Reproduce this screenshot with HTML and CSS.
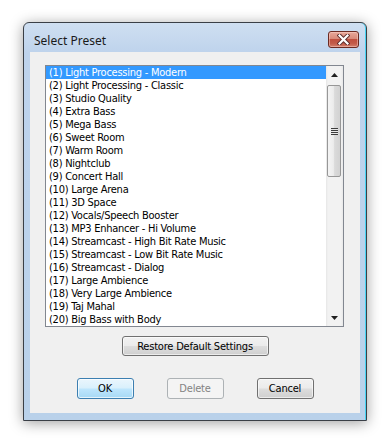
FILE: index.html
```html
<!DOCTYPE html>
<html>
<head>
<meta charset="utf-8">
<title>Select Preset</title>
<link rel="stylesheet" href="styles.css">
</head>
<body>
<div class="window">
  <div class="titlebar">
    <span class="title">Select Preset</span>
    <div class="close">
      <svg width="13" height="11" viewBox="0 0 13 11">
        <path d="M2.5 1.5 L10.5 9.5 M10.5 1.5 L2.5 9.5" stroke="#5a2a2a" stroke-width="4" stroke-linecap="square" fill="none"/>
        <path d="M2.5 1.5 L10.5 9.5 M10.5 1.5 L2.5 9.5" stroke="#ffffff" stroke-width="2.2" stroke-linecap="square" fill="none"/>
      </svg>
    </div>
  </div>
  <div class="client">
    <div class="listbox">
      <ul class="items">
        <li class="sel">(1) Light Processing - Modern</li>
        <li>(2) Light Processing - Classic</li>
        <li>(3) Studio Quality</li>
        <li>(4) Extra Bass</li>
        <li>(5) Mega Bass</li>
        <li>(6) Sweet Room</li>
        <li>(7) Warm Room</li>
        <li>(8) Nightclub</li>
        <li>(9) Concert Hall</li>
        <li>(10) Large Arena</li>
        <li>(11) 3D Space</li>
        <li>(12) Vocals/Speech Booster</li>
        <li>(13) MP3 Enhancer - Hi Volume</li>
        <li>(14) Streamcast - High Bit Rate Music</li>
        <li>(15) Streamcast - Low Bit Rate Music</li>
        <li>(16) Streamcast - Dialog</li>
        <li>(17) Large Ambience</li>
        <li>(18) Very Large Ambience</li>
        <li>(19) Taj Mahal</li>
        <li>(20) Big Bass with Body</li>
      </ul>
      <div class="scrollbar">
        <div class="sb-btn">
          <svg width="7" height="4" viewBox="0 0 7 4"><path d="M0 4 L3.5 0 L7 4 Z" fill="#202020"/></svg>
        </div>
        <div class="sb-track">
          <div class="thumb">
            <span class="grip"></span>
          </div>
        </div>
        <div class="sb-btn">
          <svg width="7" height="4" viewBox="0 0 7 4"><path d="M0 0 L7 0 L3.5 4 Z" fill="#202020"/></svg>
        </div>
      </div>
    </div>
    <div class="row-restore">
      <button class="btn restore">Restore Default Settings</button>
    </div>
    <div class="row-actions">
      <button class="btn default">OK</button>
      <button class="btn" disabled>Delete</button>
      <button class="btn">Cancel</button>
    </div>
  </div>
</div>
</body>
</html>
```

FILE: styles.css
```css
html, body {
  margin: 0;
  padding: 0;
  background: #ffffff;
}
body {
  width: 390px;
  height: 444px;
  overflow: hidden;
  padding-top: 22px;
  padding-left: 23px;
  box-sizing: border-box;
}
.window {
  width: 344px;
  height: 399px;
  box-sizing: border-box;
  border: 1px solid #3a3f46;
  border-radius: 6px 6px 0 0;
  background: linear-gradient(180deg, #cfdff1 0px, #bed3ec 30px, #b9d1ea 100%);
  box-shadow: 0 2px 14px rgba(0, 0, 0, 0.38), inset -1px 0 0 #46d4f4;
  display: flex;
  flex-direction: column;
  padding: 0 6px 7px 6px;
}
.titlebar {
  height: 29px;
  display: flex;
  align-items: flex-start;
  justify-content: space-between;
  flex: none;
}
.title {
  font-family: "Noto Sans", "Open Sans", sans-serif;
  font-size: 12px;
  color: #1a1a1a;
  margin-left: 4px;
  margin-top: 10px;
  line-height: 16px;
}
.close {
  width: 29px;
  height: 15px;
  margin-top: 8px;
  margin-right: 1px;
  border: 1px solid #6b2a22;
  border-radius: 3px;
  background: linear-gradient(180deg, #e8a89a 0%, #d98a7a 45%, #c0503f 50%, #c25a48 75%, #d37e6c 100%);
  display: flex;
  align-items: center;
  justify-content: center;
  box-shadow: inset 0 0 0 1px rgba(255, 220, 210, 0.45);
}
.client {
  flex: 1;
  background: #f0f0f0;
  display: flex;
  flex-direction: column;
  align-items: center;
  padding-top: 13px;
  font-family: "DejaVu Sans Condensed", "DejaVu Sans", sans-serif;
  font-stretch: condensed;
  font-size: 11px;
}
.listbox {
  width: 299px;
  height: 262px;
  box-sizing: border-box;
  border: 1px solid #828790;
  background: #ffffff;
  display: flex;
  margin-left: -1px;
}
.items {
  list-style: none;
  margin: 0;
  padding: 0;
  flex: 1;
}
.items li {
  height: 13px;
  line-height: 13px;
  padding-left: 3px;
  color: #000000;
  white-space: nowrap;
  letter-spacing: -0.25px;
}
.items li.sel {
  background: #3399ff;
  color: #ffffff;
}
.scrollbar {
  width: 17px;
  display: flex;
  flex-direction: column;
  background: linear-gradient(90deg, #e6e6e6 0, #f2f2f2 2px, #f2f2f2 15px, #e8e8e8 17px);
}
.sb-btn {
  height: 17px;
  display: flex;
  align-items: center;
  justify-content: center;
  flex: none;
}
.sb-track {
  flex: 1;
  padding-top: 2px;
}
.thumb {
  width: 14px;
  height: 92px;
  box-sizing: border-box;
  margin-left: 1px;
  border: 1px solid #979797;
  border-radius: 2px;
  background: linear-gradient(90deg, #f4f4f4 0%, #ececec 45%, #dadada 55%, #d2d2d2 100%);
  display: flex;
  align-items: center;
  justify-content: center;
}
.grip {
  width: 7px;
  height: 7px;
  background: repeating-linear-gradient(180deg, #3c3c3c 0, #3c3c3c 1px, #e8e8e8 1px, #e8e8e8 2px);
}
.row-restore {
  margin-top: 9px;
  display: flex;
  justify-content: center;
}
.row-actions {
  margin-top: 22px;
  display: flex;
  gap: 33px;
  justify-content: center;
}
.btn {
  font-family: "DejaVu Sans Condensed", "DejaVu Sans", sans-serif;
  font-stretch: condensed;
  font-size: 11px;
  letter-spacing: -0.2px;
  color: #000000;
  width: 57px;
  height: 21px;
  padding: 0;
  box-sizing: border-box;
  border: 1px solid #707070;
  border-radius: 3px;
  background: linear-gradient(180deg, #f2f2f2 0%, #ebebeb 48%, #dddddd 52%, #cfcfcf 100%);
  box-shadow: inset 0 0 0 1px rgba(255, 255, 255, 0.6);
}
.btn.restore {
  width: 147px;
  height: 20px;
}
.btn.default {
  border-color: #3c7fb1;
  background: linear-gradient(180deg, #eaf6fd 0%, #d9f0fc 48%, #bee6fd 52%, #a7d9f5 100%);
  box-shadow: inset 0 0 0 1px rgba(255, 255, 255, 0.7);
}
.btn:disabled {
  color: #838383;
  border-color: #adb2b5;
  background: #f4f4f4;
  box-shadow: none;
}
```
